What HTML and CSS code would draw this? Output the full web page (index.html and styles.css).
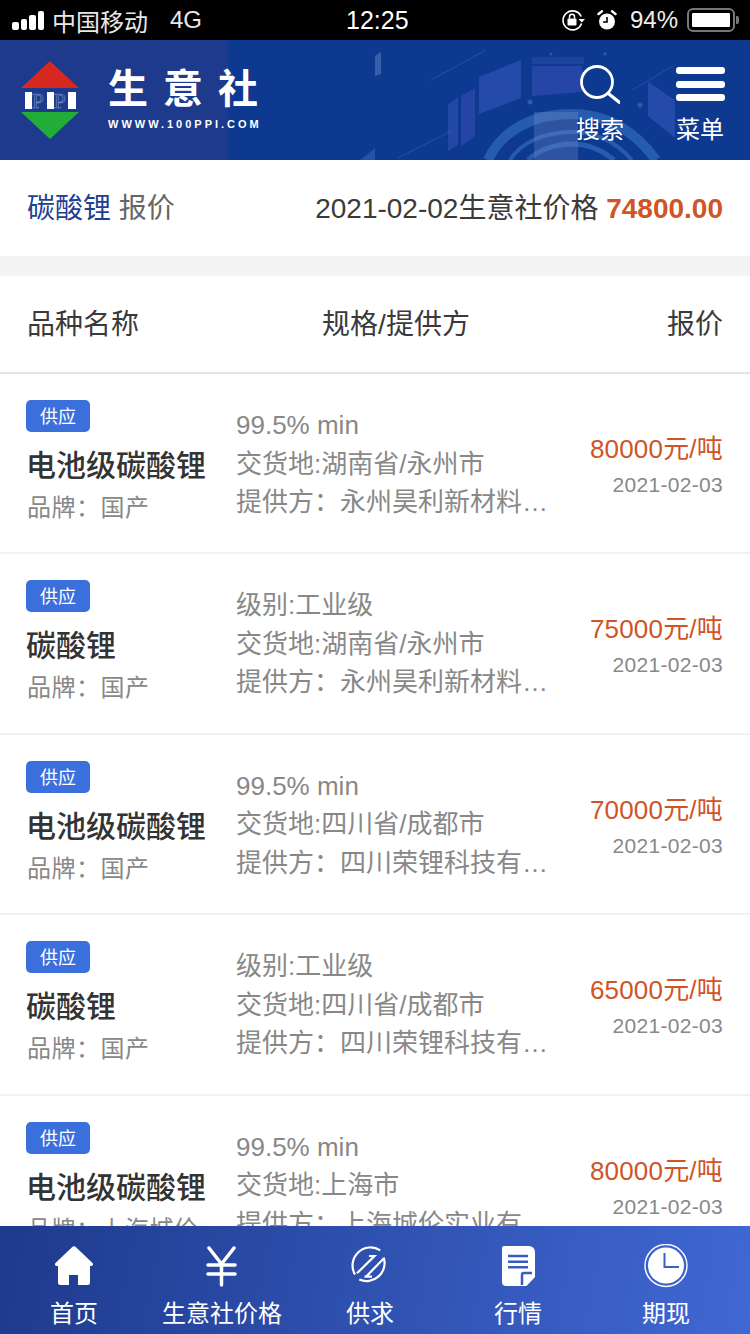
FILE: index.html
```html
<!DOCTYPE html>
<html lang="zh-CN">
<head>
  <meta charset="UTF-8" />
  <meta name="viewport" content="width=device-width, initial-scale=1.0" />
  <title>碳酸锂报价 - 生意社</title>
  <link rel="stylesheet" href="styles.css">
</head>
<body>
  <div class="page">
    <div class="status-bar">
      <div class="status-left">
        <span class="signal"><i class="s1"></i><i class="s2"></i><i class="s3"></i><i class="s4"></i></span>
        <span class="carrier">中国移动</span>
        <span class="net">4G</span>
      </div>
      <div class="status-time">12:25</div>
      <div class="status-right">
        <svg class="st-icon" width="26" height="24" viewBox="0 0 26 24">
          <path d="M20.500 15.500A9.500 9.500 0 1 1 20.200 8.500" fill="none" stroke="#fff" stroke-width="1.600"/>
          <path d="M17.500 11h6.500l-3.200 3.500z" fill="#fff"/>
          <rect x="6.500" y="10.500" width="9" height="7" rx="1" fill="#fff"/>
          <path d="M8.500 10.500V8.700a2.500 2.500 0 0 1 5 0v1.800" fill="none" stroke="#fff" stroke-width="1.500"/>
        </svg>
        <svg class="st-icon alarm" width="20" height="22" viewBox="0 0 20 22">
          <circle cx="10" cy="12.500" r="8" fill="#fff"/>
          <path d="M10 8v5H6" fill="none" stroke="#000" stroke-width="1.600"/>
          <path d="M1.500 5 5 2.200M18.500 5 15 2.200" stroke="#fff" stroke-width="2.400" stroke-linecap="round"/>
        </svg>
        <span class="battery-num">94%</span>
        <span class="battery"><i></i></span>
        <span class="battery-tip"></span>
      </div>
    </div>

    <header class="top-bar">
      <svg class="top-art" width="522" height="120" viewBox="0 0 522 120">
        <path d="M147 16l6-4v22l-6 2z" fill="#5f86c4" opacity="0.5"/>
        <path d="M132 120l15-12v12z" fill="#3f7ac8" opacity="0.4"/>
        <g stroke="#5c86d0" opacity="0.3">
          <path d="M203 40 258 10M170 118 225 90M404 50 445 26"/>
        </g>
        <g fill="#3c5cc0" opacity="0.45">
          <path d="M251 37l42-17v38l-42 16z" fill="#3f62c8"/>
          <path d="M304 26h50v26l-50 4z" fill="#4257c4"/>
          <path d="M304 17h52v7h-52z" fill="#2c55a8"/>
          <path d="M220 65l10-8v48l-10 6z"/>
          <path d="M233 56l14-8v48l-14 10z" fill="#3f55c0"/>
          <path d="M420 42l27 18v38l-27-22z" fill="#3f62c8"/>
        </g>
        <g fill="none" stroke="#3e80cc" opacity="0.5">
          <path d="M260 120c14-30 45-46 84-46 34 0 62 16 84 46" stroke-width="10"/>
          <path d="M282 120c10-16 32-28 62-28 24 0 44 10 60 28" stroke-width="4"/>
          <path d="M300 120c8-8 24-16 44-16 16 0 30 6 42 16" stroke-width="5"/>
        </g>
        <path d="M306 72h44v48h-44z" fill="#7b93c8" opacity="0.3"/>
        <g fill="#3f6cb8" opacity="0.7">
          <circle cx="302" cy="62" r="2.500"/>
          <circle cx="412" cy="65" r="2.500"/>
          <circle cx="323" cy="14" r="1.500"/>
          <circle cx="377" cy="14" r="1.500"/>
        </g>
      </svg>
      <a class="logo" href="#">
        <svg class="logo-mark" width="60" height="78" viewBox="0 0 60 78">
          <path d="M30 0 59 27H1z" fill="#d6281f"/>
          <path d="M1 51h58L30 78z" fill="#22ac38"/>
          <path d="M5 31h7v17H5zM27 31h7v17h-7zM48 31h8v17h-8z" fill="#fff"/>
          <text x="12" y="47" class="logo-ppi">P</text>
          <text x="34" y="47" class="logo-ppi">P</text>
        </svg>
        <div class="logo-text">
          <div class="logo-cn">生意社</div>
          <div class="logo-en">WWWW.100PPI.COM</div>
        </div>
      </a>
      <div class="top-actions">
        <a class="top-btn" href="#">
          <svg width="44" height="44" viewBox="0 0 44 44">
            <circle cx="21" cy="18" r="15.500" fill="none" stroke="#fff" stroke-width="2.800"/>
            <path d="M33 30 43.500 38.500" stroke="#fff" stroke-width="3.200" stroke-linecap="round"/>
          </svg>
          <span>搜索</span>
        </a>
        <a class="top-btn" href="#">
          <span class="burger"><i></i><i></i><i></i></span>
          <span>菜单</span>
        </a>
      </div>
    </header>

    <main class="content">
      <section class="summary">
        <div class="summary-name"><a href="#">碳酸锂</a> 报价</div>
        <div class="summary-price">2021-02-02生意社价格 <b>74800.00</b></div>
      </section>

      <section class="table-head">
        <div>品种名称</div>
        <div class="head-spec">规格/提供方</div>
        <div>报价</div>
      </section>

      <div class="row">
        <div class="col-name">
          <span class="tag">供应</span>
          <h3>电池级碳酸锂</h3>
          <p>品牌：国产</p>
        </div>
        <div class="col-spec">
          <p>99.5% min</p>
          <p>交货地:湖南省/永州市</p>
          <p>提供方：永州昊利新材料…</p>
        </div>
        <div class="col-price">
          <div class="price">80000元/吨</div>
          <div class="date">2021-02-03</div>
        </div>
      </div>

      <div class="row">
        <div class="col-name">
          <span class="tag">供应</span>
          <h3>碳酸锂</h3>
          <p>品牌：国产</p>
        </div>
        <div class="col-spec">
          <p>级别:工业级</p>
          <p>交货地:湖南省/永州市</p>
          <p>提供方：永州昊利新材料…</p>
        </div>
        <div class="col-price">
          <div class="price">75000元/吨</div>
          <div class="date">2021-02-03</div>
        </div>
      </div>

      <div class="row">
        <div class="col-name">
          <span class="tag">供应</span>
          <h3>电池级碳酸锂</h3>
          <p>品牌：国产</p>
        </div>
        <div class="col-spec">
          <p>99.5% min</p>
          <p>交货地:四川省/成都市</p>
          <p>提供方：四川荣锂科技有…</p>
        </div>
        <div class="col-price">
          <div class="price">70000元/吨</div>
          <div class="date">2021-02-03</div>
        </div>
      </div>

      <div class="row">
        <div class="col-name">
          <span class="tag">供应</span>
          <h3>碳酸锂</h3>
          <p>品牌：国产</p>
        </div>
        <div class="col-spec">
          <p>级别:工业级</p>
          <p>交货地:四川省/成都市</p>
          <p>提供方：四川荣锂科技有…</p>
        </div>
        <div class="col-price">
          <div class="price">65000元/吨</div>
          <div class="date">2021-02-03</div>
        </div>
      </div>

      <div class="row">
        <div class="col-name">
          <span class="tag">供应</span>
          <h3>电池级碳酸锂</h3>
          <p>品牌：上海城伦</p>
        </div>
        <div class="col-spec">
          <p>99.5% min</p>
          <p>交货地:上海市</p>
          <p>提供方：上海城伦实业有…</p>
        </div>
        <div class="col-price">
          <div class="price">80000元/吨</div>
          <div class="date">2021-02-03</div>
        </div>
      </div>
    </main>

    <nav class="tab-bar">
      <a class="tab" href="#">
        <svg width="44" height="44" viewBox="0 0 44 44">
          <path d="M20 3.200a3 3 0 0 1 4 0L40.500 19c1.200 1.300.4 3-1.200 3H38v16.500a2.500 2.500 0 0 1-2.500 2.500H26V31h-9v10H8.500A2.500 2.500 0 0 1 6 38.500V22H4.700c-1.600 0-2.400-1.700-1.200-3z" fill="#fff"/>
        </svg>
        <span>首页</span>
      </a>
      <a class="tab" href="#">
        <svg width="44" height="44" viewBox="0 0 44 44">
          <path d="M9 4 21.500 20 34 4M8 21h27M8 30h27M21.500 20v21" fill="none" stroke="#fff" stroke-width="3.500" stroke-linecap="round" stroke-linejoin="round"/>
        </svg>
        <span>生意社价格</span>
      </a>
      <a class="tab" href="#">
        <svg width="44" height="44" viewBox="0 0 44 44">
          <path d="M7 30.500A18 18 0 0 1 32.300 6.300M35.700 13.500A18 18 0 0 1 11.300 35.500" fill="none" stroke="#fff" stroke-width="2.200"/>
          <path d="M9 29.300 26.500 12H21M18 32.700 35.500 14.700M16.500 32.700H24" fill="none" stroke="#fff" stroke-width="2.200"/>
        </svg>
        <span>供求</span>
      </a>
      <a class="tab" href="#">
        <svg width="44" height="44" viewBox="0 0 44 44">
          <path d="M8 2h25a6 6 0 0 1 6 6v25l-8.500 9H10a4 4 0 0 1-4-4V4a2 2 0 0 1 2-2z" fill="#fff"/>
          <path d="M12 12h20M12 17.700h20M12 23.300h20" stroke="#3a5cbd" stroke-width="2.500"/>
          <path d="M26 41V31a2 2 0 0 1 2-2h8" fill="none" stroke="#3a5cbd" stroke-width="2.500"/>
        </svg>
        <span>行情</span>
      </a>
      <a class="tab" href="#">
        <svg width="44" height="44" viewBox="0 0 44 44">
          <circle cx="22" cy="21.500" r="21" fill="none" stroke="#fff" stroke-width="1.400"/>
          <circle cx="22" cy="21.500" r="18" fill="#fff"/>
          <path d="M20.500 9V23H35" fill="none" stroke="#3c60c4" stroke-width="2"/>
        </svg>
        <span>期现</span>
      </a>
    </nav>
  </div>
</body>
</html>
```

FILE: styles.css
```css
* {
  box-sizing: border-box;
}

body {
  margin: 0;
  font-family: "Noto Sans CJK SC", "Liberation Sans", sans-serif;
  background: #fff;
}

a {
  color: inherit;
  text-decoration: none;
}

h3, p {
  margin: 0;
  font-weight: normal;
}

.page {
  width: 750px;
  height: 1334px;
  display: flex;
  flex-direction: column;
  overflow: hidden;
}

/* status bar */
.status-bar {
  height: 40px;
  flex: none;
  background: #000;
  color: #fff;
  display: flex;
  align-items: center;
  justify-content: space-between;
  padding: 0 11px 0 12px;
  font-family: "Liberation Sans", "Noto Sans CJK SC", sans-serif;
  font-size: 24px;
  position: relative;
}

.status-left {
  display: flex;
  align-items: center;
}

.signal {
  display: flex;
  align-items: flex-end;
  gap: 2px;
  margin-right: 8px;
}

.signal i {
  display: block;
  width: 6.500px;
  background: #fff;
  border-radius: 2px;
}

.signal .s1 { height: 8px; }
.signal .s2 { height: 11px; }
.signal .s3 { height: 15px; }
.signal .s4 { height: 19px; }

.carrier {
  color: #e8e8e8;
}

.net {
  margin-left: 22px;
  color: #e8e8e8;
}

.status-time {
  position: absolute;
  left: 346px;
  font-size: 25px;
}

.status-right {
  display: flex;
  align-items: center;
}

.st-icon {
  margin-right: 10px;
}

.alarm {
  margin-right: 13px;
}

.battery-num {
  font-size: 24px;
  margin-right: 9px;
  color: #eee;
}

.battery {
  width: 48px;
  height: 24px;
  border: 2px solid #777;
  border-radius: 6px;
  padding: 3px;
  display: block;
}

.battery i {
  display: block;
  width: 38px;
  height: 14px;
  background: #fff;
  border-radius: 1px;
}

.battery-tip {
  width: 3px;
  height: 8px;
  margin-left: 1px;
  background: #777;
  border-radius: 0 2px 2px 0;
}

/* header */
.top-bar {
  height: 120px;
  flex: none;
  background: linear-gradient(90deg, #1e3a8d 0, #1e3a8d 228px, #0e3990 228px, #0e3990 100%);
  color: #fff;
  display: flex;
  justify-content: space-between;
  position: relative;
  overflow: hidden;
}

.top-art {
  position: absolute;
  left: 228px;
  top: 0;
}

.logo {
  display: flex;
  align-items: flex-start;
  position: relative;
  padding: 21px 0 0 20px;
}

.logo-ppi {
  font-family: "Liberation Serif", serif;
  font-size: 21px;
  fill: none;
  stroke: #7488c0;
  stroke-width: 0.7;
}

.logo-text {
  margin-left: 28px;
  padding-top: 2px;
}

.logo-cn {
  font-size: 40px;
  line-height: 46px;
  font-weight: 700;
  letter-spacing: 15px;
  white-space: nowrap;
}

.logo-en {
  font-family: "Liberation Sans", sans-serif;
  font-size: 11px;
  font-weight: 700;
  letter-spacing: 3px;
  margin-top: 9px;
  white-space: nowrap;
}

.top-actions {
  display: flex;
  position: relative;
  padding: 24px 25px 0 0;
  gap: 51px;
}

.top-btn {
  display: flex;
  flex-direction: column;
  align-items: flex-start;
  font-size: 24px;
  line-height: 30px;
  width: 49px;
}

.top-btn svg {
  display: block;
}

.top-btn span:last-child {
  margin-top: 5px;
  white-space: nowrap;
}

.burger {
  display: flex;
  flex-direction: column;
  gap: 6.500px;
  height: 44px;
  padding-top: 3px;
}

.burger i {
  display: block;
  width: 49px;
  height: 7px;
  background: #fff;
  border-radius: 3px;
}

/* content */
.content {
  flex: 1;
  min-height: 0;
  overflow: hidden;
}

.summary {
  height: 116px;
  border-bottom: 20px solid #f4f4f4;
  display: flex;
  align-items: center;
  justify-content: space-between;
  padding: 0 27px 4px;
  font-family: "Liberation Sans", "Noto Sans CJK SC", sans-serif;
  font-size: 28px;
  color: #3a3a3a;
}

.summary-name {
  color: #666;
}

.summary-name a {
  color: #1e3f92;
}

.summary-price b {
  color: #cf5426;
}

.table-head {
  height: 98px;
  border-bottom: 2px solid #e4e4e4;
  display: flex;
  align-items: center;
  justify-content: space-between;
  padding: 0 27px 4px;
  font-size: 28px;
  color: #3a3a3a;
}

.head-spec {
  font-family: "Liberation Sans", "Noto Sans CJK SC", sans-serif;
  margin-right: 14px;
}

.row {
  height: 180.400px;
  border-bottom: 2px solid #f2f2f2;
  display: flex;
  padding: 26px 27px 0 26px;
}

.col-name {
  width: 210px;
  flex: none;
}

.tag {
  display: block;
  width: 64px;
  height: 32px;
  background: #3b6fdc;
  border-radius: 5px;
  color: #fff;
  font-size: 18px;
  line-height: 31px;
  text-align: center;
}

.col-name h3 {
  font-size: 30px;
  line-height: 44px;
  font-weight: 500;
  color: #333;
  margin-top: 9px;
}

.col-name p {
  font-size: 24px;
  letter-spacing: 0.500px;
  line-height: 34px;
  color: #888;
  margin: 4px 0 0 1px;
}

.col-spec {
  width: 306px;
  flex: none;
  padding-top: 6px;
  font-size: 26px;
  line-height: 38.500px;
  color: #888;
}

.col-spec p {
  font-family: "Liberation Sans", "Noto Sans CJK SC", sans-serif;
  white-space: nowrap;
}

.col-price {
  flex: 1;
  text-align: right;
  padding-top: 31px;
}

.price {
  font-family: "Liberation Sans", "Noto Sans CJK SC", sans-serif;
  font-size: 26px;
  letter-spacing: 0.2px;
  line-height: 36px;
  color: #cf5426;
  white-space: nowrap;
}

.date {
  font-family: "Liberation Sans", sans-serif;
  font-size: 21px;
  letter-spacing: 0.300px;
  line-height: 30px;
  margin-top: 3px;
  color: #888;
}

/* bottom tabs */
.tab-bar {
  height: 108px;
  flex: none;
  background: linear-gradient(100deg, #1e3a8d 0, #4068d4 100%);
  display: flex;
  color: #fff;
  padding-top: 18px;
  position: relative;
}

.tab {
  width: 148px;
  display: flex;
  flex-direction: column;
  align-items: center;
  font-size: 24px;
  line-height: 30px;
}

.tab span {
  margin-top: 9px;
}
```
